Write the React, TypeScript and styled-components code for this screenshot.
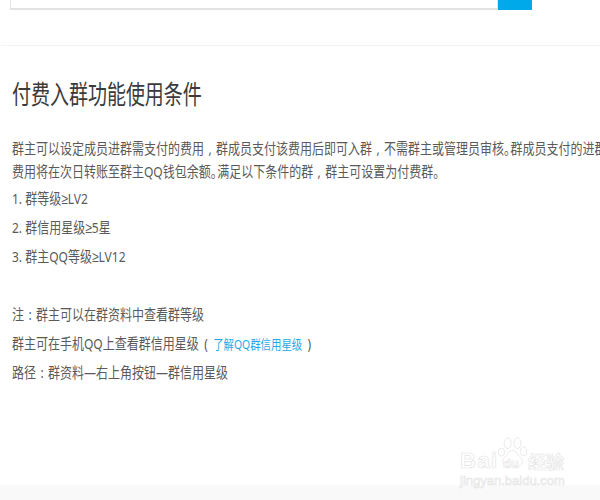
import { FC } from 'react';
import styled, { createGlobalStyle } from 'styled-components';

const GlobalStyle = createGlobalStyle`
  html, body {
    margin: 0;
    padding: 0;
    background: #fff;
    overflow: hidden;
  }
`;

const Page = styled.div`
  position: relative;
  width: 600px;
  height: 500px;
  overflow: hidden;
  font-family: "Noto Sans", "Noto Sans CJK SC", sans-serif;
  color: #5a5a5a;
`;

const SearchBar = styled.div`
  display: flex;
  width: 522px;
  height: 10px;
  margin-left: 10px;
`;

const SearchInput = styled.div`
  flex: 1;
  border: 1px solid #e4e4e4;
  border-top: 0;
  border-bottom: 2px solid #e2e2e2;
`;

const SearchButton = styled.div`
  width: 34px;
  background: #00a9e9;
`;

const Divider = styled.div`
  height: 1px;
  margin: 35px 0 0 1px;
  background: #f3f3f3;
`;

const Content = styled.div`
  padding: 30px 0 0 12px;
`;

const Title = styled.h1`
  width: 260px;
  height: 36px;
  margin: 0 0 25px;
  color: #3a3a3a;
  font-size: 26px;
  font-weight: 400;
  line-height: 36px;
  white-space: nowrap;
  transform: scaleX(0.73);
  transform-origin: left center;
`;

const Line = styled.div<{ $height: number }>`
  width: 735px;
  height: ${(p) => p.$height}px;
  font-size: 15px;
  line-height: ${(p) => p.$height}px;
  white-space: nowrap;
  transform: scaleX(0.8);
  transform-origin: left center;
`;

const Rules = styled.div`
  margin-top: 1px;
`;

const Notes = styled.div`
  margin-top: 29px;
`;

const Mark = styled.span`
  display: inline-block;
  width: 15px;
  text-align: center;
`;

const Paren = styled(Mark)`
  width: 18px;
`;

const Stop = styled.span`
  letter-spacing: -7px;
`;

const Gte = styled.span`
  font-family: "Liberation Sans", sans-serif;
`;

const HelpLink = styled.span`
  color: #1ea9e6;
  font-size: 13px;
`;

const Footer = styled.div`
  position: absolute;
  left: 0;
  right: 0;
  bottom: 0;
  height: 15px;
  background: #f9f9f9;
`;

const Watermark = styled.div`
  position: absolute;
  left: 459px;
  top: 432px;
  width: 140px;
  height: 68px;
  color: #fff;
  -webkit-text-stroke: 0.7px #e6e6e6;
  font-family: "Liberation Sans", sans-serif;
`;

const MarkBai = styled.span`
  position: absolute;
  left: 1px;
  top: 16px;
  font-size: 22px;
  font-weight: 700;
  letter-spacing: 1.5px;
`;

const MarkDu = styled.span`
  position: absolute;
  left: 44px;
  top: 24px;
  font-size: 13px;
  font-weight: 700;
`;

const MarkJing = styled.span`
  position: absolute;
  left: 69px;
  top: 17px;
  font-family: "Noto Sans CJK SC", sans-serif;
  font-size: 18px;
  font-weight: 700;
  line-height: 24px;
`;

const MarkUrl = styled.span`
  position: absolute;
  left: 1px;
  top: 41px;
  font-size: 13px;
  white-space: nowrap;
`;

const PawIcon = styled.svg`
  position: absolute;
  left: 38px;
  top: 3px;
  width: 32px;
  height: 36px;
`;

const App: FC = () => {
  return (
    <Page>
      <GlobalStyle />
      <SearchBar>
        <SearchInput />
        <SearchButton />
      </SearchBar>
      <Divider />
      <Content>
        <Title>付费入群功能使用条件</Title>
        <Line $height={23}>
          群主可以设定成员进群需支付的费用<Mark>,</Mark>群成员支付该费用后即可入群<Mark>,</Mark>不需群主或管理员审核<Stop>。</Stop>群成员支付的进群
        </Line>
        <Line $height={23}>
          费用将在次日转账至群主QQ钱包余额<Stop>。</Stop>满足以下条件的群<Mark>,</Mark>群主可设置为付费群<Stop>。</Stop>
        </Line>
        <Rules>
          <Line $height={29}>1. 群等级<Gte>≥</Gte>LV2</Line>
          <Line $height={29}>2. 群信用星级<Gte>≥</Gte>5星</Line>
          <Line $height={29}>3. 群主QQ等级<Gte>≥</Gte>LV12</Line>
        </Rules>
        <Notes>
          <Line $height={29}>注<Mark>:</Mark>群主可以在群资料中查看群等级</Line>
          <Line $height={29}>
            群主可在手机QQ上查看群信用星级<Paren>(</Paren><HelpLink>了解QQ群信用星级</HelpLink><Paren>)</Paren>
          </Line>
          <Line $height={29}>路径<Mark>:</Mark>群资料—右上角按钮—群信用星级</Line>
        </Notes>
      </Content>
      <Footer />
      <Watermark>
        <PawIcon viewBox="0 0 36 36" fill="#fff" stroke="#e6e6e6" strokeWidth="1">
          <ellipse cx="5" cy="17" rx="3.5" ry="4.5" />
          <ellipse cx="12" cy="7" rx="4" ry="6" />
          <ellipse cx="23" cy="7" rx="4" ry="6" />
          <ellipse cx="30" cy="16" rx="3.5" ry="5" />
          <path d="M17.5 15c-4 0-5 5-9 8-4 3-2 10 4 10 2 0 4-1 5-1s3 1 5 1c6 0 8-7 4-10-4-3-5-8-9-8z" />
        </PawIcon>
        <MarkBai>Bai</MarkBai>
        <MarkDu>du</MarkDu>
        <MarkJing>经验</MarkJing>
        <MarkUrl>jingyan.baidu.com</MarkUrl>
      </Watermark>
    </Page>
  );
};

export default App;
